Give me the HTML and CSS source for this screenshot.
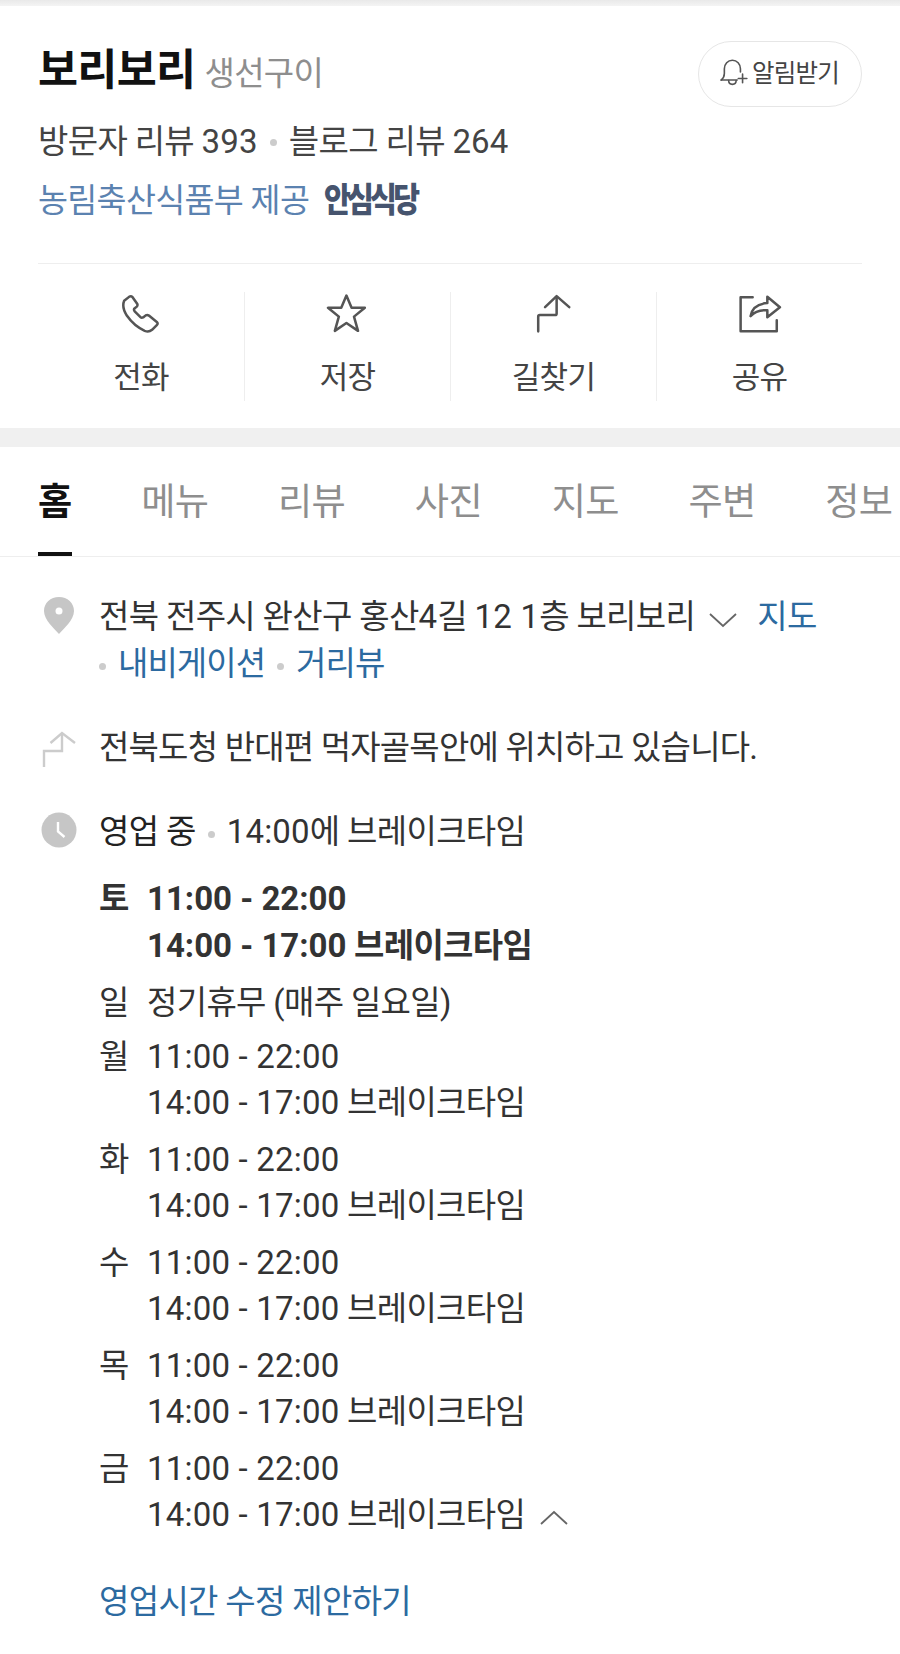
FILE: index.html
```html
<!DOCTYPE html>
<html lang="ko">
<head>
<meta charset="utf-8">
<title>보리보리</title>
<link rel="stylesheet" href="styles.css">
</head>
<body>
<div class="topstrip"></div>
<header class="head">
  <div class="titlerow">
    <div class="titles"><h1 class="name">보리보리</h1><span class="cat">생선구이</span></div>
    <button class="alarm">
      <svg class="bell" viewBox="0 0 28 28" fill="none" stroke="#555" stroke-width="1.5" stroke-linecap="round" stroke-linejoin="round"><path d="M2 21.5c2-1.500 3-3 3-6V11c0-4.500 3.200-8 7.500-8S20 6.500 20 11v3"/><path d="M2 21.500H17"/><path d="M9 22c0 2 1.500 3.500 3.500 3.500S16 24 16 22"/><path d="M22 16v8M18 20h8"/></svg>
      <span>알림받기</span>
    </button>
  </div>
  <div class="reviews"><span>방문자 리뷰 <span class="num">393</span></span><i class="dot"></i><span>블로그 리뷰 <span class="num">264</span></span></div>
  <div class="safe"><span>농림축산식품부 제공</span><b class="safelogo">안심식당</b></div>
</header>
<nav class="actions">
  <a class="action">
    <svg class="aicon" viewBox="0 0 38 38" fill="none" stroke="#555" stroke-width="2.400" stroke-linejoin="round"><path d="M3 6.500 8 2.500Q9.500 1.500 11 3L15.500 9.500Q16 11 15 12L12.500 14Q12 15 13 16.500L18.500 22Q19.500 23 21 22.300L23.500 20.300Q25 19.500 26.500 20.500L34 26.500Q35.500 28 34 29.500L29.500 34Q26.500 36.500 22.500 35Q12.500 30.500 5.500 20.500Q.5 12.500 3 6.500Z"/></svg>
    <span>전화</span>
  </a>
  <a class="action">
    <svg class="aicon" viewBox="0 0 38 38" fill="none" stroke="#555" stroke-width="2.400" stroke-linejoin="round"><path d="M17.500 1.500 22.400 13H35L24.700 21.500 28.500 35 17.500 27.500 6.500 35 10.300 21.500 0 13H12.600Z"/></svg>
    <span>저장</span>
  </a>
  <a class="action">
    <svg class="aicon" viewBox="0 0 38 38" fill="none" stroke="#555" stroke-width="2.400" stroke-linecap="round" stroke-linejoin="round"><path d="M4 35.500V21.500Q4 20 5.500 20H20Q21.500 20 21.500 18.500V3"/><path d="M10.500 12.500 21.500 2 33.500 12.500"/></svg>
    <span>길찾기</span>
  </a>
  <a class="action">
    <svg class="aicon" viewBox="0 0 42 38" fill="none" stroke="#555" stroke-width="2.400" stroke-linecap="round" stroke-linejoin="round"><path d="M14 3H2.500V35.500H37V25"/><path d="M12 21Q14 9.500 28 8.500V2.500L40 12.500 28 22V15.500Q18 14.500 12 21Z"/></svg>
    <span>공유</span>
  </a>
</nav>
<div class="band"></div>
<nav class="tabs">
  <a class="tab on">홈</a><a class="tab">메뉴</a><a class="tab">리뷰</a><a class="tab">사진</a><a class="tab">지도</a><a class="tab">주변</a><a class="tab">정보</a>
</nav>
<main class="info">
  <section class="row addr">
    <svg class="ricon" viewBox="0 0 36 38" ><path fill="#c6c6c6" d="M18 38C13 32 3 24 3 15 3 7 9.500 1 18 1S33 7 33 15C33 24 23 32 18 38Z"/><circle cx="18" cy="15" r="3.500" fill="#fff"/></svg>
    <div class="rbody">
      <div class="line">전북 전주시 완산구 홍산<span class="num">4</span>길 <span class="num">12 1</span>층 보리보리<svg class="chev" viewBox="0 0 30 16" fill="none" stroke="#666" stroke-width="1.800"><path d="M2 2 15 14 28 2"/></svg><a class="link first">지도</a></div>
      <div class="line tight"><i class="dot dotl"></i><a class="link">내비게이션</a><i class="dot"></i><a class="link">거리뷰</a></div>
    </div>
  </section>
  <section class="row way">
    <svg class="ricon wayicon" viewBox="0 0 36 38" fill="none" stroke="#ccc" stroke-width="2.400"><path d="M3 37V21H21V4"/><path d="M9.500 13 21 3 34 13"/></svg>
    <div class="rbody"><div class="line wayline">전북도청 반대편 먹자골목안에 위치하고 있습니다.</div></div>
  </section>
  <section class="row hours">
    <svg class="ricon" viewBox="0 0 36 38"><circle cx="18" cy="19" r="17.500" fill="#c6c6c6"/><path d="M17 11V20.500L23.500 26" fill="none" stroke="#fff" stroke-width="2.400"/></svg>
    <div class="rbody">
      <div class="line"><span class="open">영업 중</span><i class="dot"></i><span><span class="num">14:00</span>에 브레이크타임</span></div>
      <dl class="week">
        <div class="day today"><dt>토</dt><dd><span class="num">11:00 - 22:00</span><br><span class="num">14:00 - 17:00</span> 브레이크타임</dd></div>
        <div class="day single"><dt>일</dt><dd>정기휴무 (매주 일요일)</dd></div>
        <div class="day"><dt>월</dt><dd><span class="num">11:00 - 22:00</span><br><span class="num">14:00 - 17:00</span> 브레이크타임</dd></div>
        <div class="day"><dt>화</dt><dd><span class="num">11:00 - 22:00</span><br><span class="num">14:00 - 17:00</span> 브레이크타임</dd></div>
        <div class="day"><dt>수</dt><dd><span class="num">11:00 - 22:00</span><br><span class="num">14:00 - 17:00</span> 브레이크타임</dd></div>
        <div class="day"><dt>목</dt><dd><span class="num">11:00 - 22:00</span><br><span class="num">14:00 - 17:00</span> 브레이크타임</dd></div>
        <div class="day"><dt>금</dt><dd><span class="num">11:00 - 22:00</span><br><span class="num">14:00 - 17:00</span> 브레이크타임<svg class="chev up" viewBox="0 0 30 16" fill="none" stroke="#666" stroke-width="1.800"><path d="M2 14 15 2 28 14"/></svg></dd></div>
      </dl>
      <a class="link suggest">영업시간 수정 제안하기</a>
    </div>
  </section>
</main>
</body>
</html>
```
FILE: styles.css
```css
* { box-sizing: border-box; }
html, body { margin: 0; padding: 0; }
body {
  width: 900px;
  height: 1654px;
  overflow: hidden;
  background: #fff;
  color: #333;
  font-family: Roboto, "Noto Sans CJK KR", "Noto Sans", sans-serif;
  font-size: 33px;
  letter-spacing: -0.66px;
}
.num { letter-spacing: 0.2px; }
.topstrip { height: 6px; background: linear-gradient(#e9e9e9, #f4f4f4); }
.head { padding: 37px 38px 0; height: 257px; }
.titlerow { display: flex; justify-content: space-between; align-items: flex-start; }
.titles { display: flex; align-items: baseline; gap: 9px; }
.name { margin: 0; font-size: 43.5px; font-weight: 700; line-height: 56px; color: #111; letter-spacing: -0.66px; }
.cat { color: #8e8e8e; }
.alarm {
  display: flex; align-items: center; gap: 3px;
  width: 164px; height: 66px; padding: 0 0 5px 20px;
  margin: -2px 0 0;
  background: #fff; border: 1.5px solid #e6e6e6; border-radius: 33px;
  font: inherit; font-size: 24.5px; color: #444; letter-spacing: -0.8px;
}
.bell { width: 30px; height: 30px; flex: none; }
.reviews { display: flex; align-items: center; margin-top: 12px; line-height: 46px; color: #444; }
.dot { display: inline-block; width: 7px; height: 7px; border-radius: 50%; background: #ccc; margin: 0 12px; flex: none; vertical-align: middle; }
.safe { display: flex; align-items: center; gap: 15px; line-height: 46px; margin-top: 13px; color: #5b82b0; font-size: 32.6px; }
.safelogo { font-size: 31px; font-weight: 900; color: #46546e; letter-spacing: -4px; transform: scale(0.94, 1.1); transform-origin: left center; }
.actions {
  display: grid; grid-template-columns: repeat(4, 1fr);
  margin: 0 38px; padding-top: 28px; height: 165px;
  border-top: 1.5px solid #eee;
}
.action {
  display: flex; flex-direction: column; align-items: center; height: 109px;
  border-left: 1.5px solid #eee; color: #444; font-size: 31px;
}
.action:first-child { border-left: 0; }
.aicon { height: 40px; width: 44px; margin-top: 2px; }
.action span { line-height: 44px; margin-top: 22px; }
.band { height: 19px; background: #f0f0f0; }
.tabs {
  display: flex; gap: 69.7px; padding: 0 0 0 38px; height: 110px;
  overflow: hidden; border-bottom: 1.5px solid #eee;
  font-size: 37.2px; color: #8e8e8e;
}
.tab { flex: none; height: 109px; padding-top: 30px; line-height: 50px; }
.tab.on { color: #111; font-weight: 700; border-bottom: 4px solid #111; }
.info { padding: 36px 38px 0 38px; }
.row { display: flex; }
.ricon { width: 36px; height: 38px; margin: 3px 22px 0 3px; flex: none; }
.wayicon { margin-top: 6px; }
.rbody { flex: 1; min-width: 0; }
.line { line-height: 47px; white-space: nowrap; }
.tight { letter-spacing: -0.95px; }
.wayline { letter-spacing: -0.8px; }
.way { margin-top: 37px; }
.hours { margin-top: 37px; }
.open { color: #222; }
.chev { width: 30px; height: 16px; margin: 0 19px 0 13px; }
.chev.up { margin: 0 0 0 14px; }
.link { color: #2c6aa0; }
.dotl { margin-left: 0; }
.week { margin: 21px 0 0; }
.day { display: grid; grid-template-columns: 48px 1fr; line-height: 46.5px; margin-bottom: 10px; }
.day dt, .day dd { margin: 0; }
.today { font-weight: 700; color: #333; margin-bottom: 11px; }
.today .num { letter-spacing: 0; }
.single { margin-bottom: 7px; }
.suggest { display: block; margin-top: 39px; line-height: 47px; }
```
